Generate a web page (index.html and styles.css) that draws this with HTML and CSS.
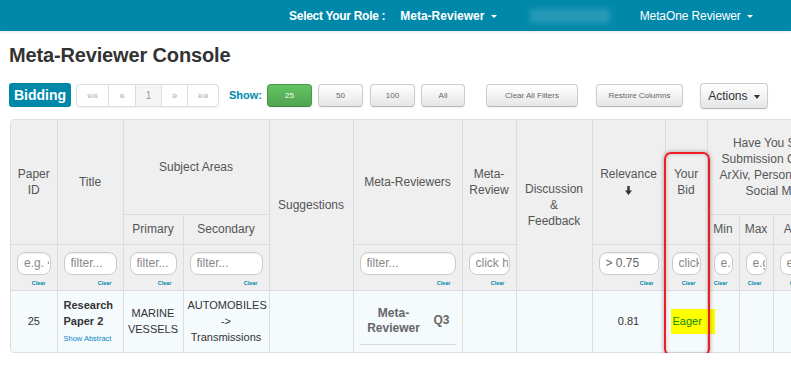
FILE: index.html
```html
<!DOCTYPE html>
<html lang="en">
<head>
<meta charset="UTF-8">
<meta name="viewport" content="width=device-width, initial-scale=1.0">
<title>Meta-Reviewer Console</title>
<link rel="stylesheet" href="styles.css">
</head>
<body>
    <!-- Top navigation -->
    <div class="topbar">
        <span class="role-label">Select Your Role :</span>
        <span class="role-menu">Meta-Reviewer <b class="caret"></b></span>
        <span class="blurred"></span>
        <span class="user-menu">MetaOne Reviewer <b class="caret"></b></span>
    </div>

    <h1>Meta-Reviewer Console</h1>

    <!-- Toolbar -->
    <div class="toolbar">
        <span class="phase">Bidding</span>
        <ul class="pager">
            <li class="first">&laquo;&laquo;</li>
            <li class="prev">&laquo;</li>
            <li class="current">1</li>
            <li>&raquo;</li>
            <li class="last">&raquo;&raquo;</li>
        </ul>
        <span class="show">Show:</span>
        <button class="btn btn-green">25</button>
        <button class="btn btn-50">50</button>
        <button class="btn btn-100">100</button>
        <button class="btn btn-all">All</button>
        <button class="btn btn-clear">Clear All Filters</button>
        <button class="btn btn-restore">Restore Columns</button>
        <button class="btn btn-actions">Actions <b class="caret dark"></b></button>
    </div>

    <!-- Papers table -->
    <div class="grid">
        <table>
            <colgroup>
                <col style="width: 46px">
                <col style="width: 66px">
                <col style="width: 60px">
                <col style="width: 86px">
                <col style="width: 84px">
                <col style="width: 109px">
                <col style="width: 54px">
                <col style="width: 76px">
                <col style="width: 73px">
                <col style="width: 42px">
                <col style="width: 32px">
                <col style="width: 34px">
                <col style="width: 42px">
                <col style="width: 48px">
            </colgroup>
            <thead>
                <tr class="head-1">
                    <th rowspan="2">Paper<br>ID</th>
                    <th rowspan="2">Title</th>
                    <th colspan="2">Subject Areas</th>
                    <th rowspan="3">Suggestions</th>
                    <th rowspan="2">Meta-Reviewers</th>
                    <th rowspan="2">Meta-<br>Review</th>
                    <th rowspan="3">Discussion<br>&amp;<br>Feedback</th>
                    <th rowspan="2">Relevance<br>
                        <svg class="sort-icon" width="7" height="9" viewBox="0 0 7 9"><path d="M2.3 0h2.4v4.6H7L3.5 9 0 4.6h2.3z" fill="#333"/></svg>
                    </th>
                    <th rowspan="2">Your<br>Bid</th>
                    <th colspan="4" class="nowrap">Have You Seen this<br>Submission Online (e.g.<br>ArXiv, Personal Website,<br>Social Media)?</th>
                </tr>
                <tr class="head-2">
                    <th>Primary</th>
                    <th>Secondary</th>
                    <th>Min</th>
                    <th>Max</th>
                    <th>Avg</th>
                    <th>Std</th>
                </tr>
                <tr class="filters">
                    <td><input placeholder="e.g. <5"><a class="clear">Clear</a></td>
                    <td><input placeholder="filter..."><a class="clear">Clear</a></td>
                    <td><input placeholder="filter..."><a class="clear">Clear</a></td>
                    <td><input placeholder="filter..."><a class="clear">Clear</a></td>
                    <td><input placeholder="filter..."><a class="clear">Clear</a></td>
                    <td><input placeholder="click here"><a class="clear">Clear</a></td>
                    <td><input value="&gt; 0.75"><a class="clear">Clear</a></td>
                    <td><input placeholder="click here"><a class="clear">Clear</a></td>
                    <td><input placeholder="e.g. >3"><a class="clear">Clear</a></td>
                    <td><input placeholder="e.g. >3"><a class="clear">Clear</a></td>
                    <td><input placeholder="e.g. >3"><a class="clear">Clear</a></td>
                    <td><input placeholder="e.g. >3"><a class="clear">Clear</a></td>
                </tr>
            </thead>
            <tbody>
                <tr class="paper">
                    <td>25</td>
                    <td class="title">Research<br>Paper 2<br><a class="abstract">Show Abstract</a></td>
                    <td>MARINE<br>VESSELS</td>
                    <td class="nowrap">AUTOMOBILES<br>-&gt;<br>Transmissions</td>
                    <td></td>
                    <td class="mr-cell">
                        <div class="mr">
                            <span class="mr-name">Meta-<br>Reviewer</span>
                            <span class="mr-q">Q3</span>
                        </div>
                    </td>
                    <td></td>
                    <td></td>
                    <td>0.81</td>
                    <td class="bid-cell"><span class="bid">Eager</span></td>
                    <td></td>
                    <td></td>
                    <td></td>
                    <td></td>
                </tr>
            </tbody>
        </table>
    </div>

    <div class="highlight"></div>
</body>
</html>
```

FILE: styles.css
```css
body {
margin: 0;
font-family: "Liberation Sans", Arial, sans-serif;
color: #333;
background: #fff;
overflow: hidden;
position: relative;
}

.topbar {
height: 31px;
background: #0088ab;
display: flex;
align-items: center;
justify-content: flex-end;
padding-right: 38px;
font-size: 12px;
color: #fff;
box-shadow: 0 1px 3px rgba(0, 0, 0, 0.1);
}

.role-label {
font-weight: bold;
letter-spacing: -0.3px;
margin-right: 15px;
}

.role-menu {
font-weight: bold;
margin-right: 33px;
}

.blurred {
width: 80px;
height: 14px;
background: rgba(255, 255, 255, 0.16);
filter: blur(3px);
margin-right: 30px;
}

.user-menu {
letter-spacing: -0.1px;
}

.caret {
display: inline-block;
width: 0;
height: 0;
border-top: 3px solid #fff;
border-left: 3px solid transparent;
border-right: 3px solid transparent;
vertical-align: middle;
margin-left: 3px;
}

.caret.dark {
border-top: 4px solid #333;
border-left: 3.5px solid transparent;
border-right: 3.5px solid transparent;
}

h1 {
font-size: 20px;
line-height: 24px;
letter-spacing: -0.15px;
margin: 12px 0 0 9px;
}

/* toolbar */
.toolbar {
display: flex;
align-items: flex-start;
margin: 16px 0 0 9px;
height: 26px;
}

.phase {
background: #0088ab;
color: #fff;
font-weight: bold;
font-size: 14px;
height: 24px;
line-height: 24px;
width: 62px;
text-align: center;
border-radius: 3px;
}

.pager {
list-style: none;
margin: 1px 0 0 5px;
padding: 0;
display: flex;
border: 1px solid #ddd;
border-radius: 4px;
height: 21px;
box-shadow: 0 1px 2px rgba(0, 0, 0, 0.05);
}

.pager li {
width: 25px;
border-left: 1px solid #ddd;
text-align: center;
line-height: 21px;
font-size: 10px;
color: #aaa;
}

.pager li.first {
width: 31px;
border-left: none;
}

.pager li.prev {
width: 26px;
}

.pager li.last {
width: 30px;
}

.pager li.current {
background: #f5f5f5;
color: #999;
}

.show {
margin-left: 10px;
color: #0088ab;
font-weight: bold;
font-size: 11px;
line-height: 24px;
}

.btn {
height: 23px;
width: 45px;
margin: 1px 0 0 6px;
padding: 0;
border: 1px solid #ccc;
border-bottom-color: #b8b8b8;
border-radius: 4px;
background: linear-gradient(#ffffff, #e6e6e6);
font-family: "Liberation Sans", Arial, sans-serif;
font-size: 8px;
color: #666;
box-shadow: 0 1px 2px rgba(0, 0, 0, 0.06);
}

.btn-green {
margin-left: 5px;
background: linear-gradient(#62c462, #51a351);
border-color: #4a9a4a #4a9a4a #3d8a3d;
color: #fff;
}

.btn-100 {
margin-left: 7px;
}

.btn-all {
width: 44px;
}

.btn-clear {
width: 92px;
margin-left: 21px;
}

.btn-restore {
width: 87px;
margin-left: 18px;
}

.btn-actions {
width: 68px;
height: 26px;
margin: 0 0 0 17px;
font-size: 12px;
color: #333;
}

/* table */
.grid {
margin: 10px 0 0 10px;
width: 852px;
border: 1px solid #ddd;
border-radius: 4px;
overflow: hidden;
}

table {
width: 852px;
table-layout: fixed;
border-collapse: collapse;
border-style: hidden;
}

th, td {
border: 1px solid #dcdcdc;
text-align: center;
vertical-align: middle;
padding: 0 4px;
}

th {
background: #efefef;
color: #555;
font-weight: normal;
font-size: 12px;
line-height: 16px;
}

.head-1 {
height: 94px;
}

.head-2 {
height: 30px;
}

.nowrap {
white-space: nowrap;
}

.sort-icon {
display: inline-block;
vertical-align: middle;
}

.filters {
height: 46px;
}

.filters td {
background: #efefef;
vertical-align: top;
padding: 7px 6px 0 6px;
}

.filters input {
display: block;
width: 100%;
box-sizing: border-box;
height: 23px;
border: 1px solid #ccc;
border-radius: 8px;
padding: 0 1px 0 6px;
font-family: "Liberation Sans", Arial, sans-serif;
font-size: 12px;
color: #666;
background: #fff;
box-shadow: inset 0 1px 1px rgba(0, 0, 0, 0.07);
}

.filters input::placeholder {
color: #888;
}

.clear {
display: block;
text-align: right;
padding-right: 5px;
margin-top: 4px;
font-size: 5.5px;
line-height: 8px;
font-weight: bold;
color: #0088ab;
}

.paper {
height: 62px;
}

.paper td {
background: #f5fafd;
font-size: 11px;
line-height: 16px;
color: #333;
}

.paper td.title {
text-align: left;
padding-left: 6px;
font-weight: bold;
}

.abstract {
font-size: 7.5px;
line-height: 14px;
font-weight: normal;
color: #0a86c4;
}

.paper td.mr-cell {
padding: 0 6px;
}

.mr {
display: flex;
align-items: center;
padding: 8px 0;
border-bottom: 1px solid #ddd;
font-weight: bold;
font-size: 12px;
line-height: 15px;
color: #666;
}

.mr-name {
width: 68px;
text-align: center;
}

.mr-q {
flex: 1;
text-align: center;
}

.paper td.bid-cell {
text-align: left;
padding-left: 5px;
overflow: visible;
}

.bid {
display: inline-block;
width: 44px;
height: 25px;
line-height: 25px;
padding-left: 2px;
box-sizing: border-box;
background: #ffff00;
color: #0a8a0a;
font-size: 11px;
vertical-align: middle;
}

/* red annotation box drawn over the bid column */
.highlight {
position: absolute;
left: 664px;
top: 152px;
width: 46px;
height: 204px;
box-sizing: border-box;
border: 2px solid #ee1c24;
border-radius: 7px;
box-shadow: 0 0 4px rgba(0, 0, 0, 0.35), inset 0 0 4px rgba(0, 0, 0, 0.2);
}
```
